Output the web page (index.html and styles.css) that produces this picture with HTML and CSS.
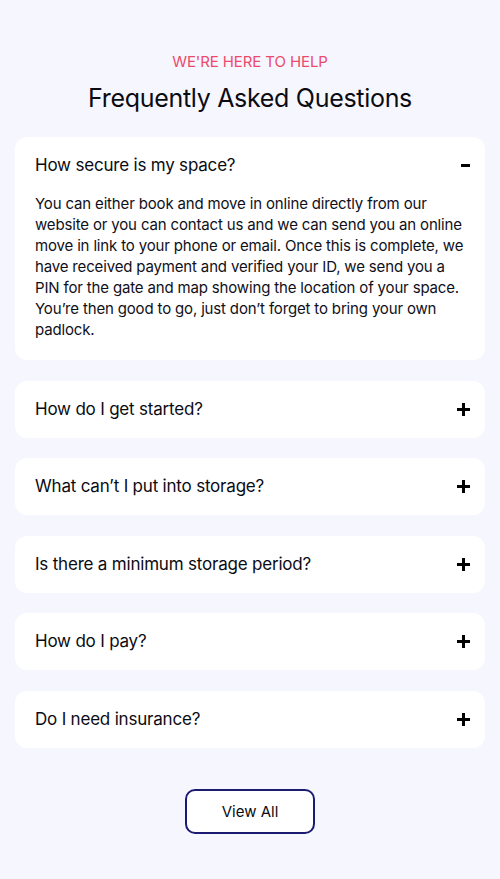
FILE: index.html
```html
<!DOCTYPE html>
<html>
<head>
<meta charset="utf-8">
<link rel="stylesheet" href="styles.css">
</head>
<body>
<section class="faq">
  <p class="eyebrow">WE'RE HERE TO HELP</p>
  <h1 class="title">Frequently Asked Questions</h1>
  <div class="list">
    <div class="item open">
      <div class="q"><span>How secure is my space?</span><span class="icon minus"></span></div>
      <p class="a">You can either book and move in online directly from our website or you can contact us and we can send you an online move in link to your phone or email. Once this is complete, we have received payment and verified your ID, we send you a PIN for the gate and map showing the location of your space. You’re then good to go, just don’t forget to bring your own padlock.</p>
    </div>
    <div class="item"><div class="q"><span>How do I get started?</span><span class="icon plus"></span></div></div>
    <div class="item"><div class="q"><span>What can’t I put into storage?</span><span class="icon plus"></span></div></div>
    <div class="item"><div class="q"><span>Is there a minimum storage period?</span><span class="icon plus"></span></div></div>
    <div class="item"><div class="q"><span>How do I pay?</span><span class="icon plus"></span></div></div>
    <div class="item"><div class="q"><span>Do I need insurance?</span><span class="icon plus"></span></div></div>
  </div>
  <div class="actions"><button class="btn">View All</button></div>
</section>
</body>
</html>
```
FILE: styles.css
```css
html, body { margin: 0; padding: 0; }
body {
  background: #f6f6fe;
  font-family: Inter, "Noto Sans", sans-serif;
  color: #0b0b12;
}
.faq { padding: 53px 15px 40px; }
.eyebrow {
  margin: 0;
  text-align: center;
  color: #ec4a6c;
  font-size: 15px;
  line-height: 18px;
  letter-spacing: -0.1px;
}
.title {
  margin: 12px 0 0;
  text-align: center;
  font-weight: 400;
  font-size: 25px;
  line-height: 30px;
  letter-spacing: -0.3px;
}
.list {
  margin-top: 24px;
  display: flex;
  flex-direction: column;
  gap: 20.5px;
}
.item {
  background: #fff;
  border-radius: 12px;
  padding: 18px 20px;
}
.item.open { padding-bottom: 20px; }
.q {
  display: flex;
  justify-content: space-between;
  align-items: center;
  font-size: 17px;
  line-height: 21px;
  letter-spacing: -0.2px;
}
.icon { position: relative; width: 13px; height: 13px; margin-right: -5px; }
.icon::before, .icon::after {
  content: "";
  position: absolute;
  background: #000;
}
.plus::before { left: 0; top: 5px; width: 13px; height: 3px; }
.plus::after { left: 5px; top: 0; width: 3px; height: 13px; }
.minus::before { left: 4px; top: 5px; width: 9px; height: 3px; }
.minus::after { display: none; }
.a {
  margin: 17px 0 0;
  font-size: 15px;
  line-height: 21px;
  letter-spacing: -0.16px;
  color: #10101a;
}
.actions { display: flex; justify-content: center; margin-top: 41px; }
.btn {
  width: 130px;
  height: 45px;
  background: #fff;
  border: 2px solid #1b1b72;
  border-radius: 10px;
  font-family: Inter, "Noto Sans", sans-serif;
  font-size: 15px;
  color: #0b0b12;
}
```
